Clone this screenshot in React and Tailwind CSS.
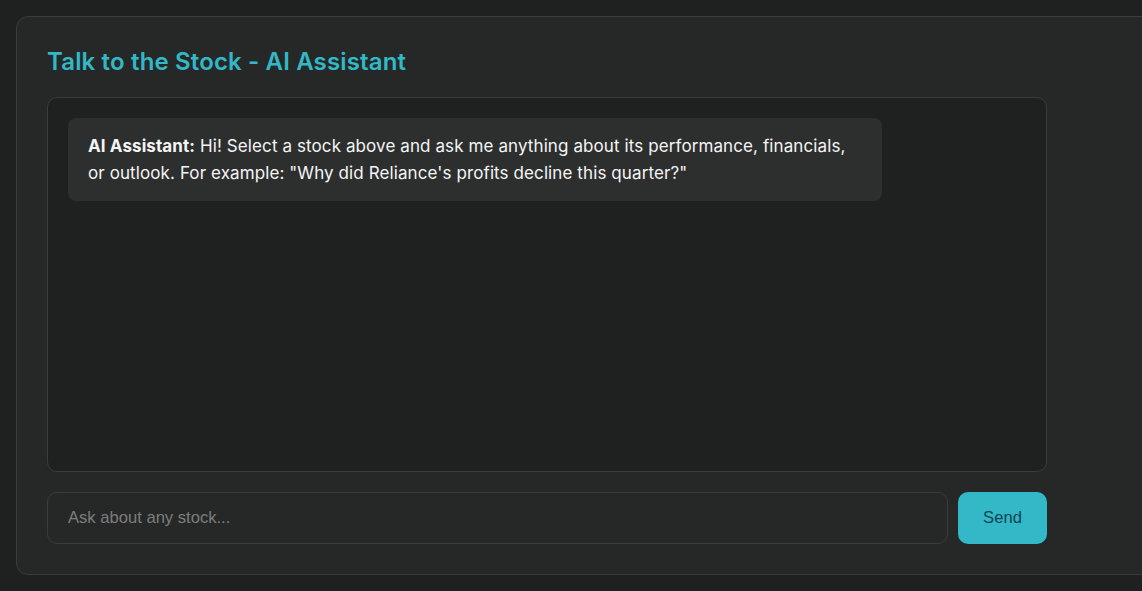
export default function App() {
  return (
    <div className="min-h-[591px] w-full overflow-hidden bg-[#1f2121] p-4" style={{ fontFamily: 'Inter, "Liberation Sans", sans-serif' }}>
      <div className="w-[1200px] rounded-xl border border-[#3a3c3c] bg-[#262828] p-[30px]">
        <div className="w-[1000px]">
          <h2 className="mb-5 text-2xl leading-[30px] font-semibold tracking-[0.15px] text-[#32b8c6]">Talk to the Stock - AI Assistant</h2>
          <div className="h-[375px] rounded-[10px] border border-[#3a3c3c] bg-[#1f2121] p-5">
            <div className="max-w-[85%] rounded-lg bg-[#2d2f2f] px-5 py-[14.5px] text-[17px] leading-[27px] tracking-[0.1px] text-[#f5f5f5]">
              <strong className="font-bold">AI Assistant:</strong> Hi! Select a stock above and ask me anything about its performance, financials, or outlook. For example: "Why did Reliance's profits decline this quarter?"
            </div>
          </div>
          <div className="mt-5 flex gap-2.5">
            <input
              className="h-[52px] flex-1 rounded-[10px] border border-[#3a3c3c] bg-[#262828] px-5 text-[16.6px] text-[#f5f5f5] placeholder-[#7b7e7e] outline-none"
              style={{ fontFamily: '"Liberation Sans", Arial, sans-serif' }}
              placeholder="Ask about any stock..."
            />
            <button
              className="h-[52px] w-[89px] rounded-[10px] bg-[#32b8c6] text-[16.6px] text-[#134252]"
              style={{ fontFamily: '"Liberation Sans", Arial, sans-serif' }}
            >
              Send
            </button>
          </div>
        </div>
      </div>
    </div>
  );
}
